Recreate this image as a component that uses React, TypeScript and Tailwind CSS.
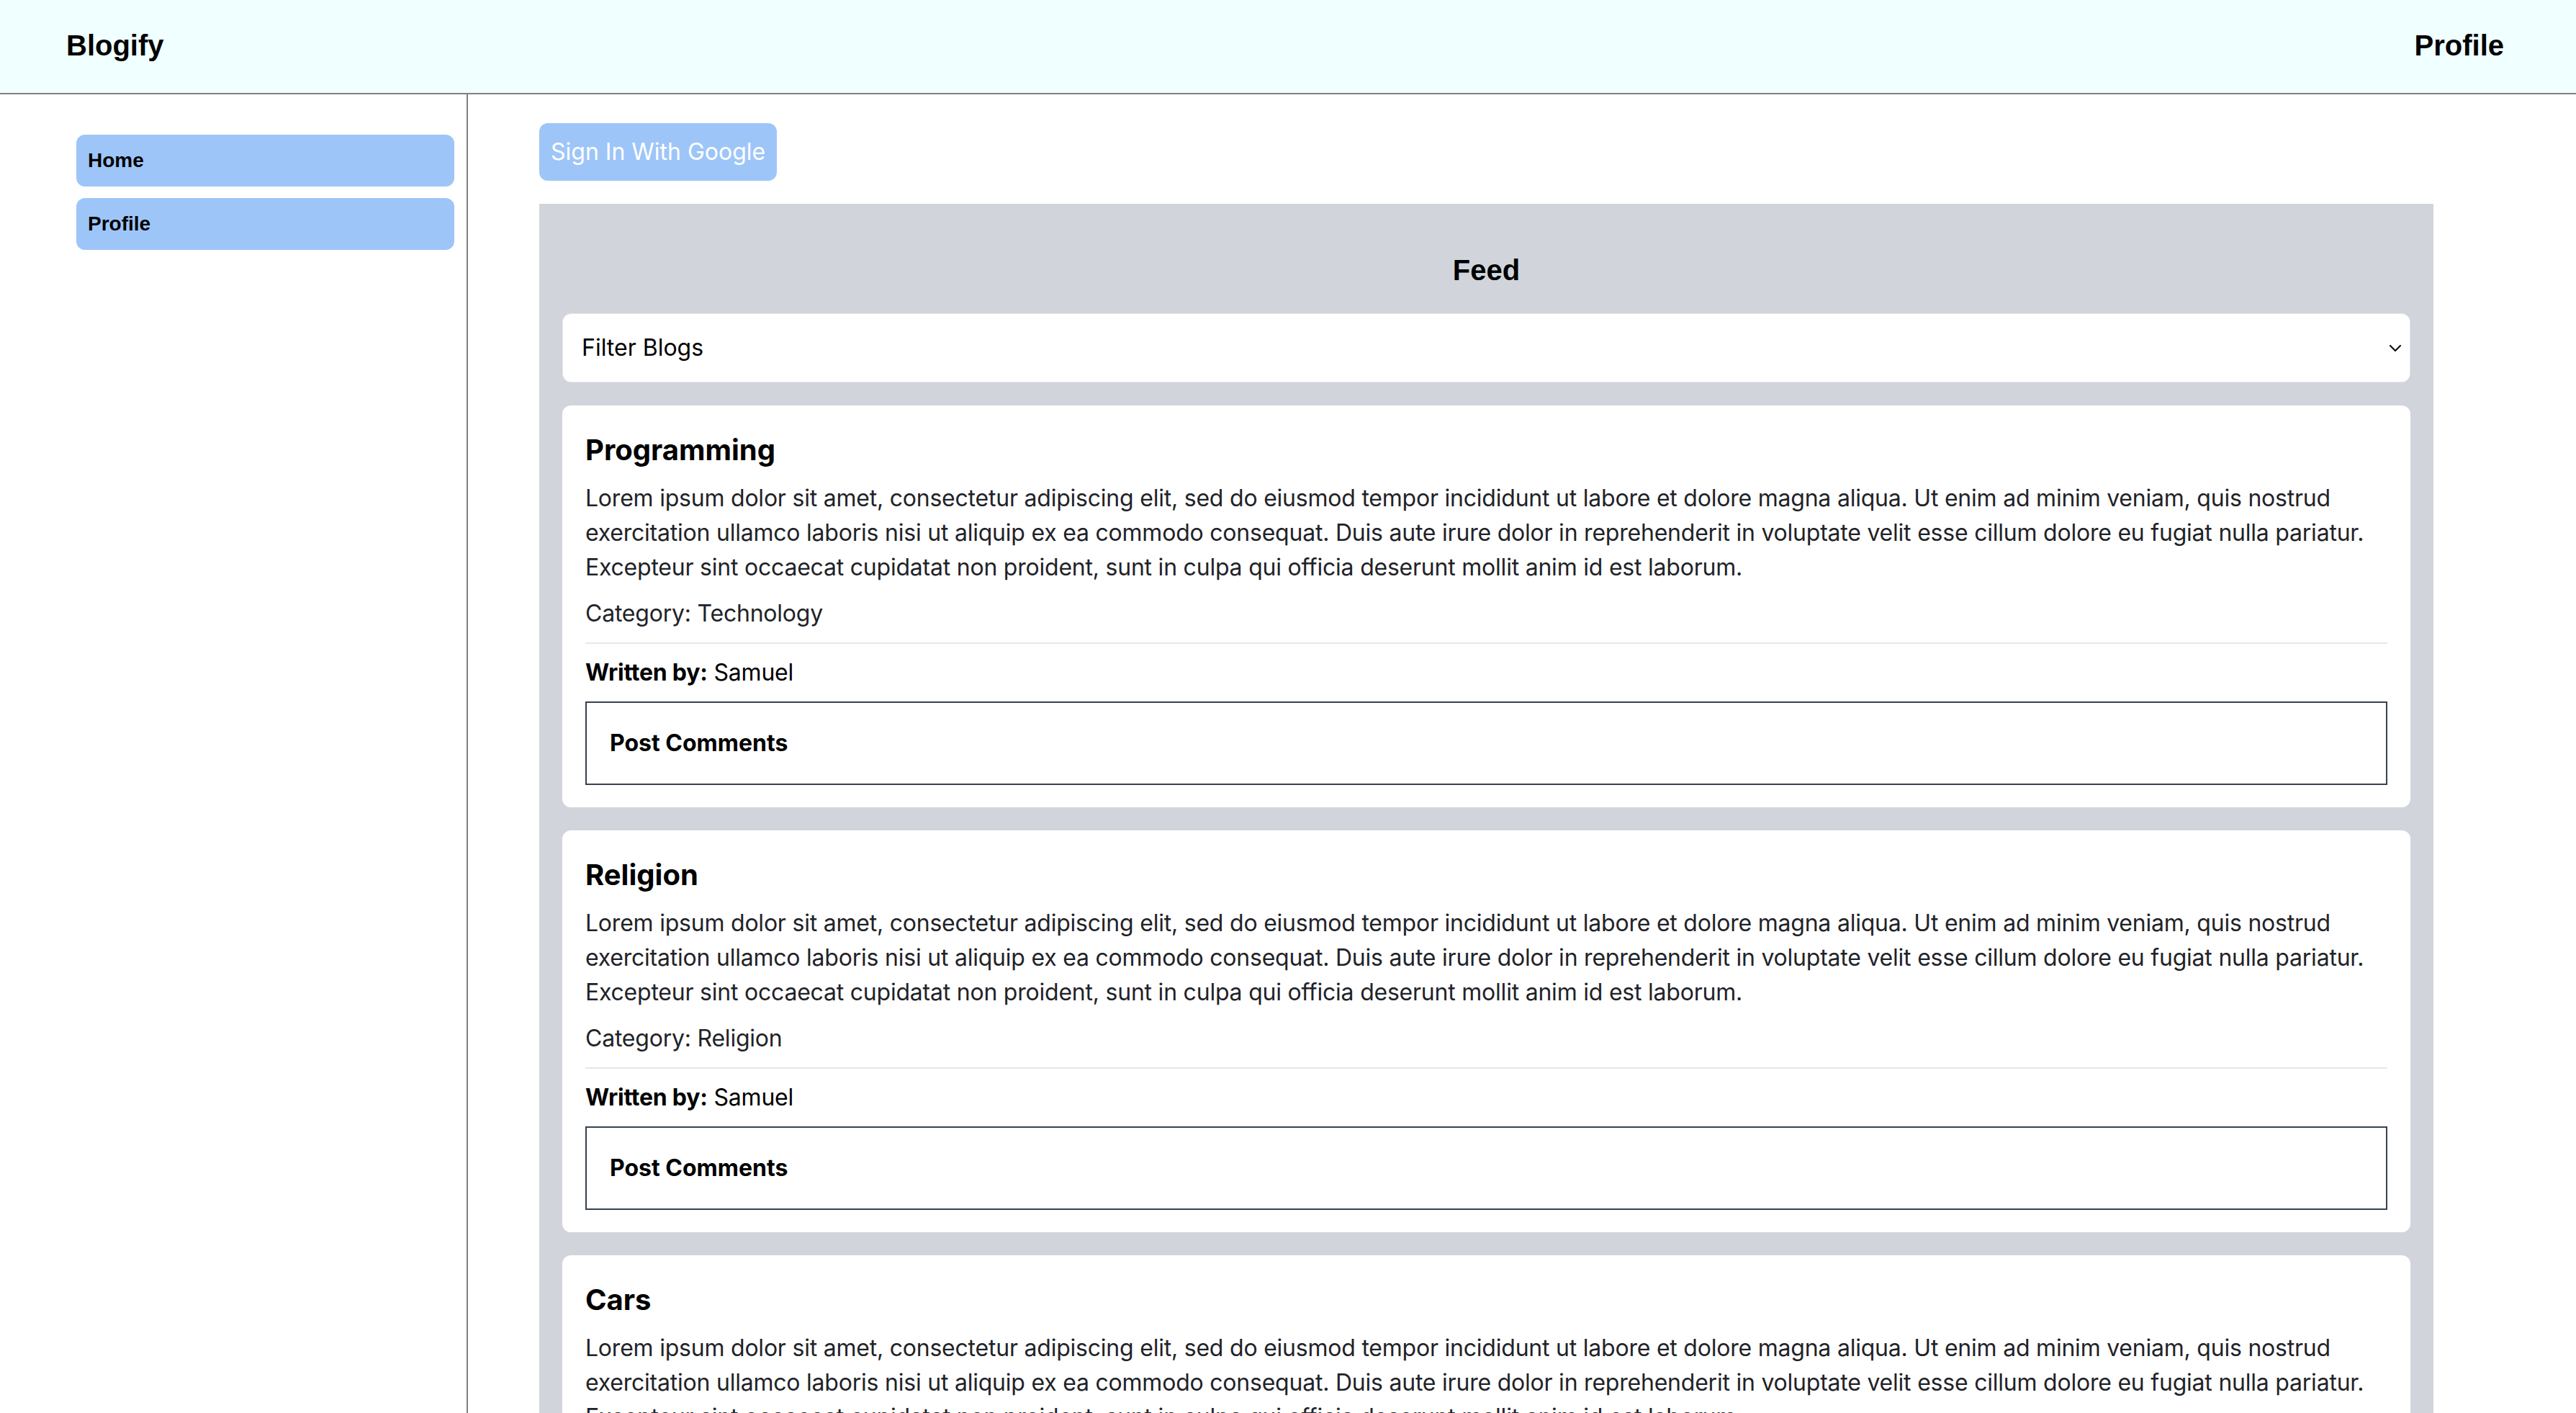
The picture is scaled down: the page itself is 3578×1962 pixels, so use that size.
import React from "react";

const LOREM =
  "Lorem ipsum dolor sit amet, consectetur adipiscing elit, sed do eiusmod tempor incididunt ut labore et dolore magna aliqua. Ut enim ad minim veniam, quis nostrud exercitation ullamco laboris nisi ut aliquip ex ea commodo consequat. Duis aute irure dolor in reprehenderit in voluptate velit esse cillum dolore eu fugiat nulla pariatur. Excepteur sint occaecat cupidatat non proident, sunt in culpa qui officia deserunt mollit anim id est laborum.";

const posts = [
  { title: "Programming", category: "Technology", author: "Samuel" },
  { title: "Religion", category: "Religion", author: "Samuel" },
  { title: "Cars", category: "Cars", author: "Samuel" },
];

const HEAD = "font-['Liberation_Sans',Arial,sans-serif]";
const BODY = "font-['Inter','Noto_Sans',sans-serif]";

function PostCard({ title, category, author }: { title: string; category: string; author: string }) {
  return (
    <div className={`bg-white rounded-[12px] pt-[34px] px-[32px] pb-[31px] ${BODY}`}>
      <h2 className="text-[40px] leading-[56px] font-bold text-black mb-[15px]">{title}</h2>
      <p className="text-[32px] leading-[48px] tracking-[-0.22px] text-[#1f2328]">{LOREM}</p>
      <p className="text-[32px] leading-[48px] tracking-[-0.22px] text-[#1f2328] mt-[16px]">Category: {category}</p>
      <hr className="my-[16px] border-0 h-[2px] bg-[#e5e7eb]" />
      <p className="text-[32px] leading-[48px] tracking-[-0.22px] text-black">
        <span className="font-bold">Written by:</span> {author}
      </p>
      <div className="mt-[16px] border-2 border-[#374151] p-[32px]">
        <h3 className="text-[32px] leading-[48px] font-bold text-black">Post Comments</h3>
      </div>
    </div>
  );
}

export default function App() {
  return (
    <div className="h-screen flex flex-col overflow-hidden bg-white">
      <header
        className={`h-[131px] shrink-0 bg-[#f0ffff] border-b-2 border-[#808080] flex items-center justify-between pl-[92px] pr-[100px] pb-[4px] ${HEAD}`}
      >
        <span className="text-[40px] leading-[56px] font-bold text-black">Blogify</span>
        <span className="text-[40px] leading-[56px] font-bold text-black">Profile</span>
      </header>
      <div className="flex flex-1 min-h-0">
        <aside className="w-[650px] shrink-0 border-r-2 border-[#808080] pl-[106px] pr-[17px] pt-[56px]">
          <nav className={`flex flex-col gap-[16px] ${HEAD}`}>
            <a className="block bg-[#9ec5f8] rounded-[12px] px-[16px] py-[16px] text-[28px] leading-[40px] font-bold text-black">
              Home
            </a>
            <a className="block bg-[#9ec5f8] rounded-[12px] px-[16px] py-[16px] text-[28px] leading-[40px] font-bold text-black">
              Profile
            </a>
          </nav>
        </aside>
        <main className="flex-1 min-w-0 pl-[99px] pr-[198px] pt-[40px] flex flex-col items-start">
          <button
            className={`bg-[#9ec5f8] rounded-[12px] px-[16px] py-[16px] text-[32px] leading-[48px] text-white ${BODY}`}
          >
            Sign In With Google
          </button>
          <section className="mt-[32px] w-full bg-[#d1d5db] p-[32px] flex-1">
            <h1 className={`text-center text-[40px] leading-[56px] font-bold text-black my-[32px] ${HEAD}`}>Feed</h1>
            <div className="relative">
              <select
                className={`w-full h-[96px] appearance-none bg-white rounded-[12px] border border-[#e5e7eb] pl-[26px] pr-[60px] text-[32px] text-black ${BODY}`}
                defaultValue=""
              >
                <option value="">Filter Blogs</option>
                <option value="technology">Technology</option>
                <option value="religion">Religion</option>
                <option value="cars">Cars</option>
              </select>
              <svg
                className="absolute right-[12px] top-1/2 -translate-y-1/2 pointer-events-none"
                width="18"
                height="12"
                viewBox="0 0 18 12"
                fill="none"
              >
                <path d="M2 3l7 7 7-7" stroke="#111" strokeWidth="2.2" strokeLinecap="round" strokeLinejoin="round" />
              </svg>
            </div>
            <div className="mt-[32px] flex flex-col gap-[32px]">
              {posts.map((p) => (
                <PostCard key={p.title} {...p} />
              ))}
            </div>
          </section>
        </main>
      </div>
    </div>
  );
}
